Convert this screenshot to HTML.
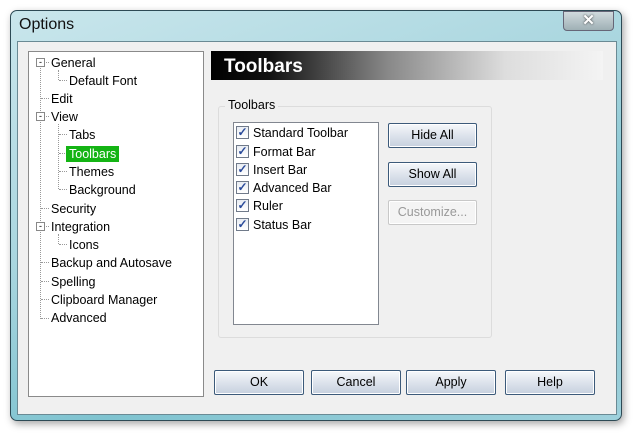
<!DOCTYPE html><html><head><style>
body{margin:0;width:640px;height:436px;background:#fff;position:relative;overflow:hidden;font-family:"Liberation Sans",sans-serif;font-size:12.5px;color:#000}
.a{position:absolute}
.win{left:10px;top:10px;width:610px;height:409px;border:1px solid #2d4a55;border-radius:7px;background:linear-gradient(160deg,#c9e6ec 0%,#a9d6df 40%,#7fc3d0 70%,#9fd1dc 100%);box-shadow:2px 3px 8px rgba(0,0,0,.35)}
.client{left:17px;top:41px;width:598px;height:372px;background:#f0f0f0;border:1px solid #6a8a94}
.tree{left:28px;top:51px;width:174px;height:344px;background:#fff;border:1px solid #8a8a8a}
.t{position:absolute;white-space:nowrap;line-height:16px}
.btn{position:absolute;height:23px;border:1px solid #3c5a7a;border-radius:2px;background:linear-gradient(#f6f8fb,#dde3ec 50%,#c6d0de);text-align:center;line-height:23px;box-shadow:inset 0 0 0 1px #fff}
.cb{position:absolute;left:236px;width:11px;height:11px;border:1px solid #707a8a;background:linear-gradient(#e8ecf2,#fff);font-size:12px;line-height:11px;color:#2a4a9a;text-align:center;font-weight:bold}
.dot{position:absolute;border-left:1px dotted #999}
.h{position:absolute;width:8px;border-top:1px dotted #999}
</style></head><body>
<div class="a win"></div>
<div class="a" style="left:19px;top:16px;font-size:16px;color:#111">Options</div>
<div class="a" style="left:563px;top:11px;width:49px;height:18px;border:1px solid #667;border-radius:0 0 4px 4px;background:linear-gradient(#d0dadd,#9fb0b5);text-align:center;color:#fff;font-size:15px;line-height:18px;font-weight:bold;text-shadow:0 0 2px #333">✕</div>
<div class="a client"></div>
<div class="a tree"></div>
<div class="dot" style="left:40px;top:66px;height:253px"></div>
<div class="dot" style="left:58px;top:70px;height:10px"></div>
<div class="dot" style="left:58px;top:124px;height:65px"></div>
<div class="dot" style="left:58px;top:234px;height:10px"></div>
<div class="h" style="left:44px;top:62px;width:5px"></div>
<div class="h" style="left:59px;top:80px"></div>
<div class="h" style="left:41px;top:98px"></div>
<div class="h" style="left:44px;top:116px;width:5px"></div>
<div class="h" style="left:59px;top:134px"></div>
<div class="h" style="left:59px;top:153px"></div>
<div class="h" style="left:59px;top:171px"></div>
<div class="h" style="left:59px;top:189px"></div>
<div class="h" style="left:41px;top:208px"></div>
<div class="h" style="left:44px;top:226px;width:5px"></div>
<div class="h" style="left:59px;top:244px"></div>
<div class="h" style="left:41px;top:262px"></div>
<div class="h" style="left:41px;top:281px"></div>
<div class="h" style="left:41px;top:299px"></div>
<div class="h" style="left:41px;top:318px"></div>
<div class="a" style="left:36px;top:58px;width:7px;height:7px;border:1px solid #888;background:#fff;font-size:9px;line-height:7px;text-align:center">-</div>
<div class="a" style="left:36px;top:112px;width:7px;height:7px;border:1px solid #888;background:#fff;font-size:9px;line-height:7px;text-align:center">-</div>
<div class="a" style="left:36px;top:222px;width:7px;height:7px;border:1px solid #888;background:#fff;font-size:9px;line-height:7px;text-align:center">-</div>
<div class="t" style="left:51px;top:55px">General</div>
<div class="t" style="left:69px;top:73px">Default Font</div>
<div class="t" style="left:51px;top:91px">Edit</div>
<div class="t" style="left:51px;top:109px">View</div>
<div class="t" style="left:69px;top:127px">Tabs</div>
<div class="t" style="left:66px;top:146px;background:#14b414;color:#fff;padding:0 3px">Toolbars</div>
<div class="t" style="left:69px;top:164px">Themes</div>
<div class="t" style="left:69px;top:182px">Background</div>
<div class="t" style="left:51px;top:201px">Security</div>
<div class="t" style="left:51px;top:219px">Integration</div>
<div class="t" style="left:69px;top:237px">Icons</div>
<div class="t" style="left:51px;top:255px">Backup and Autosave</div>
<div class="t" style="left:51px;top:274px">Spelling</div>
<div class="t" style="left:51px;top:292px">Clipboard Manager</div>
<div class="t" style="left:51px;top:310px">Advanced</div>
<div class="a" style="left:211px;top:51px;width:392px;height:29px;background:linear-gradient(90deg,#000 0%,#111 15%,#888 45%,#ddd 75%,#f4f4f4 100%)"></div>
<div class="a" style="left:224px;top:55px;color:#fff;font-weight:bold;font-size:19px;line-height:24px">Toolbars</div>
<div class="a" style="left:218px;top:106px;width:272px;height:230px;border:1px solid #dcdcdc;border-radius:3px"></div>
<div class="a" style="left:225px;top:98px;background:#f0f0f0;padding:0 3px">Toolbars</div>
<div class="a" style="left:233px;top:122px;width:144px;height:201px;background:#fff;border:1px solid #828790"></div>
<div class="cb" style="top:126px">✓</div><div class="t" style="left:253px;top:125px">Standard Toolbar</div>
<div class="cb" style="top:145px">✓</div><div class="t" style="left:253px;top:144px">Format Bar</div>
<div class="cb" style="top:163px">✓</div><div class="t" style="left:253px;top:162px">Insert Bar</div>
<div class="cb" style="top:181px">✓</div><div class="t" style="left:253px;top:180px">Advanced Bar</div>
<div class="cb" style="top:199px">✓</div><div class="t" style="left:253px;top:198px">Ruler</div>
<div class="cb" style="top:218px">✓</div><div class="t" style="left:253px;top:217px">Status Bar</div>
<div class="btn" style="left:388px;top:123px;width:87px">Hide All</div>
<div class="btn" style="left:388px;top:162px;width:87px">Show All</div>
<div class="btn" style="left:388px;top:200px;width:87px;border-color:#c8c8c8;background:#f4f4f4;color:#999">Customize...</div>
<div class="btn" style="left:214px;top:370px;width:88px">OK</div>
<div class="btn" style="left:311px;top:370px;width:88px">Cancel</div>
<div class="btn" style="left:406px;top:370px;width:88px">Apply</div>
<div class="btn" style="left:505px;top:370px;width:88px">Help</div>
</body></html>
